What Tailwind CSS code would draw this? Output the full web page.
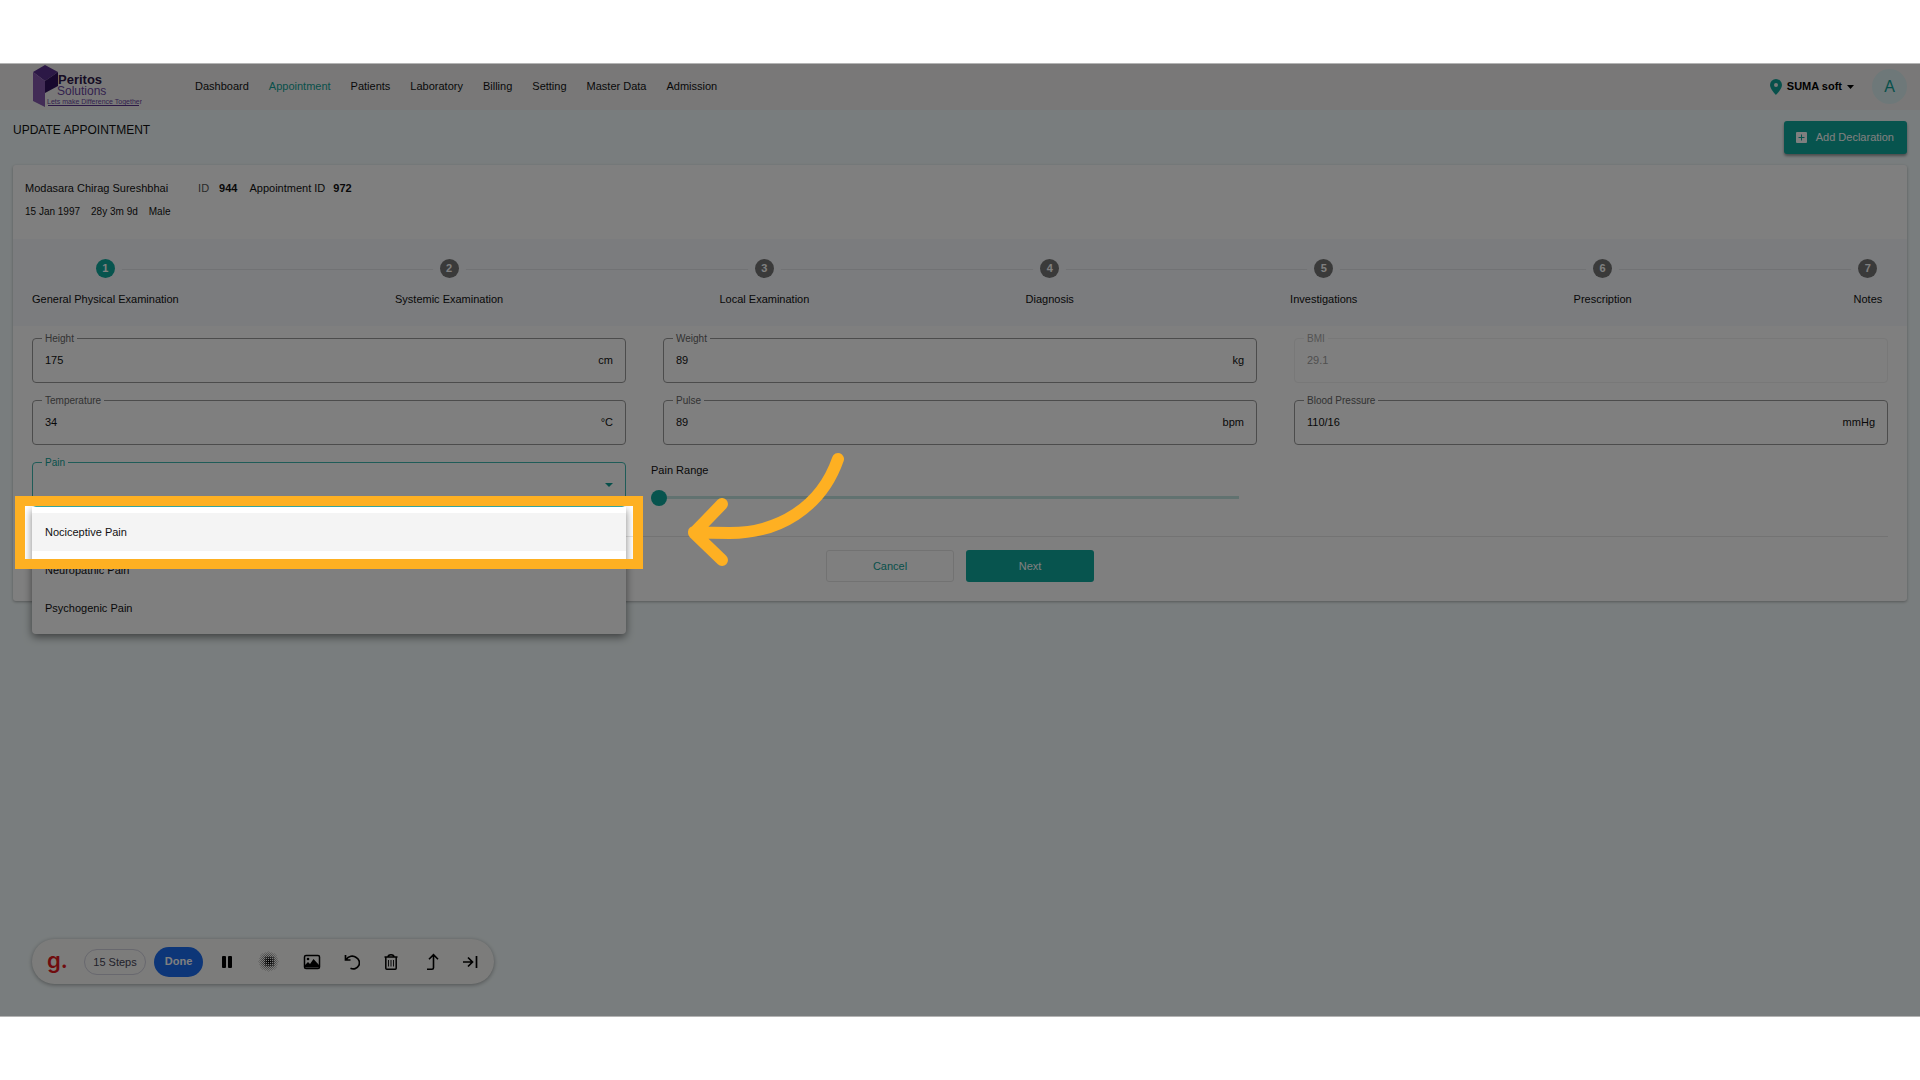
<!DOCTYPE html>
<html lang="en">
<head>
  <meta charset="UTF-8">
  <meta name="viewport" content="width=device-width, initial-scale=1.0">
  <title>Update Appointment - Peritos Solutions</title>
  <script src="https://cdn.jsdelivr.net/npm/@tailwindcss/browser@4"></script>
</head>
<body class="bg-white min-h-screen flex flex-col py-[63px] font-['Liberation_Sans',Arial,sans-serif] text-[11px] text-[#111]">

  <div class="relative flex-1 flex flex-col overflow-hidden bg-[#f3fbfc]">

    <!-- Top bar -->
    <header class="h-[47px] bg-[#f3f1f1] flex items-center pl-8 pr-[13px]">
      <a href="#" aria-label="Peritos Solutions" class="block">
        <svg width="110" height="46" viewBox="0 0 110 46">
          <polygon points="1,8 13,1 26,8 13,17" fill="#58308c" />
          <polygon points="1,8 13,17 13,43 1,37" fill="#8458ac" />
          <polygon points="13,17 26,8 26,22 13,29" fill="#30105c" />
          <text x="26" y="20" font-size="13" font-weight="bold" fill="#2c1848">Peritos</text>
          <text x="25" y="31" font-size="12" fill="#68449c">Solutions</text>
          <text x="15" y="40" font-size="7" fill="#68449c">Lets make Difference Together</text>
          <rect x="16" y="41" width="91" height="1" fill="#58308c" />
        </svg>
      </a>
      <nav class="flex gap-5 ml-[53px]">
        <a href="#">Dashboard</a>
        <a href="#" class="text-[#0fa196]">Appointment</a>
        <a href="#">Patients</a>
        <a href="#">Laboratory</a>
        <a href="#">Billing</a>
        <a href="#">Setting</a>
        <a href="#">Master Data</a>
        <a href="#">Admission</a>
      </nav>
      <button class="ml-auto flex items-center gap-[5px] font-bold text-black">
        <svg width="12" height="16" viewBox="0 0 12 16"><path fill="#0fa196" fill-rule="evenodd" d="M6 0a6 6 0 0 0-6 6c0 4 6 10 6 10s6-6 6-10a6 6 0 0 0-6-6zm0 4a2 2 0 1 1 0 4 2 2 0 0 1 0-4z" /></svg>
        SUMA soft
        <svg width="7" height="4" viewBox="0 0 7 4"><path d="M0 0h7L3.500 4z" /></svg>
      </button>
      <button class="ml-[18px] size-[35px] rounded-full bg-[#dcf0f2] text-base text-[#0fa196]">A</button>
    </header>

    <main class="px-[13px]">
      <div class="flex items-start justify-between py-[11px]">
        <h1 class="text-xs leading-[18px]">UPDATE APPOINTMENT</h1>
        <button class="flex items-center gap-[9px] h-[33px] px-[13px] pl-3 rounded-[3px] bg-[#0fa89c] text-white shadow-[0_2px_3px_rgba(0,0,0,0.4)]">
          <svg width="11" height="11" viewBox="0 0 11 11"><rect width="11" height="11" rx="1" fill="#fff" /><path d="M5.500 2.500v6M2.500 5.500h6" stroke="#0fa89c" /></svg>
          Add Declaration
        </button>
      </div>

      <section class="bg-white rounded-[3px] shadow-[0_1px_3px_rgba(0,0,0,0.3)]">

        <!-- Patient -->
        <div class="px-3 pt-3 pb-[14px]">
          <div class="flex items-center leading-[22px]">
            <h2>Modasara Chirag Sureshbhai</h2>
            <span class="ml-[30px] text-[#555]">ID</span>
            <b class="ml-[10px]">944</b>
            <span class="ml-3">Appointment ID</span>
            <b class="ml-2">972</b>
          </div>
          <div class="flex gap-[11px] text-[10px] leading-[26px]">
            <span>15 Jan 1997</span>
            <span>28y 3m 9d</span>
            <span>Male</span>
          </div>
        </div>

        <!-- Stepper -->
        <div class="relative bg-[#f6f8fc] px-[19px] pt-5 pb-[19px]">
          <div class="absolute left-[94px] right-10 top-[30px] h-px bg-[#e2e4e8]"></div>
          <ol class="relative flex justify-between leading-4">
            <li class="flex flex-col items-center gap-[13px]"><span class="size-[19px] rounded-full bg-[#0fa89c] ring-7 ring-[#f6f8fc] text-white font-bold leading-[19px] text-center">1</span>General Physical Examination</li>
            <li class="flex flex-col items-center gap-[13px]"><span class="size-[19px] rounded-full bg-[#757575] ring-7 ring-[#f6f8fc] text-white font-bold leading-[19px] text-center">2</span>Systemic Examination</li>
            <li class="flex flex-col items-center gap-[13px]"><span class="size-[19px] rounded-full bg-[#757575] ring-7 ring-[#f6f8fc] text-white font-bold leading-[19px] text-center">3</span>Local Examination</li>
            <li class="flex flex-col items-center gap-[13px]"><span class="size-[19px] rounded-full bg-[#757575] ring-7 ring-[#f6f8fc] text-white font-bold leading-[19px] text-center">4</span>Diagnosis</li>
            <li class="flex flex-col items-center gap-[13px]"><span class="size-[19px] rounded-full bg-[#757575] ring-7 ring-[#f6f8fc] text-white font-bold leading-[19px] text-center">5</span>Investigations</li>
            <li class="flex flex-col items-center gap-[13px]"><span class="size-[19px] rounded-full bg-[#757575] ring-7 ring-[#f6f8fc] text-white font-bold leading-[19px] text-center">6</span>Prescription</li>
            <li class="flex flex-col items-center gap-[13px] w-10"><span class="size-[19px] rounded-full bg-[#757575] ring-7 ring-[#f6f8fc] text-white font-bold leading-[19px] text-center">7</span>Notes</li>
          </ol>
        </div>

        <!-- Vitals -->
        <form class="px-[19px] pt-3 pb-[19px]">
          <div class="grid grid-cols-3 gap-x-[37px] gap-y-[17px]">
            <div class="relative flex items-center h-[45px] px-3 border border-[#999] rounded-[4px]">
              <label for="height" class="absolute left-[9px] -top-2 px-[3px] bg-white text-[10px] leading-4 text-[#666]">Height</label>
              <input id="height" type="text" value="175" class="flex-1 min-w-0 outline-none">
              <span>cm</span>
            </div>
            <div class="relative flex items-center h-[45px] px-3 border border-[#999] rounded-[4px]">
              <label for="weight" class="absolute left-[9px] -top-2 px-[3px] bg-white text-[10px] leading-4 text-[#666]">Weight</label>
              <input id="weight" type="text" value="89" class="flex-1 min-w-0 outline-none">
              <span>kg</span>
            </div>
            <div class="relative flex items-center h-[45px] px-3 border border-[#f0f0f0] rounded-[4px]">
              <label for="bmi" class="absolute left-[9px] -top-2 px-[3px] bg-white text-[10px] leading-4 text-[#a8a8a8]">BMI</label>
              <input id="bmi" type="text" value="29.1" disabled class="flex-1 min-w-0 outline-none text-[#a0a0a0]">
            </div>
            <div class="relative flex items-center h-[45px] px-3 border border-[#999] rounded-[4px]">
              <label for="temperature" class="absolute left-[9px] -top-2 px-[3px] bg-white text-[10px] leading-4 text-[#666]">Temperature</label>
              <input id="temperature" type="text" value="34" class="flex-1 min-w-0 outline-none">
              <span>°C</span>
            </div>
            <div class="relative flex items-center h-[45px] px-3 border border-[#999] rounded-[4px]">
              <label for="pulse" class="absolute left-[9px] -top-2 px-[3px] bg-white text-[10px] leading-4 text-[#666]">Pulse</label>
              <input id="pulse" type="text" value="89" class="flex-1 min-w-0 outline-none">
              <span>bpm</span>
            </div>
            <div class="relative flex items-center h-[45px] px-3 border border-[#999] rounded-[4px]">
              <label for="bp" class="absolute left-[9px] -top-2 px-[3px] bg-white text-[10px] leading-4 text-[#666]">Blood Pressure</label>
              <input id="bp" type="text" value="110/16" class="flex-1 min-w-0 outline-none">
              <span>mmHg</span>
            </div>
            <div class="relative flex items-center h-[45px] px-3 border border-[#3fb8b0] rounded-[4px]">
              <label for="pain" class="absolute left-[9px] -top-2 px-[3px] bg-white text-[10px] leading-4 text-[#0fa196]">Pain</label>
              <select id="pain" class="flex-1 appearance-none outline-none"><option></option></select>
              <svg width="8" height="4" viewBox="0 0 8 4"><path fill="#0fa196" d="M0 0h8L4 4z" /></svg>
              <!-- Open option list -->
              <ul role="listbox" aria-label="Pain" class="absolute -left-px -right-px top-11 z-10 pt-[6px] pb-[7px] bg-white rounded-b-[4px] shadow-[0_3px_8px_rgba(0,0,0,0.5)] leading-[38px]">
                <li role="option" class="px-[13px] bg-[#f4f4f4]">Nociceptive Pain</li>
                <li role="option" class="px-[13px]">Neuropathic Pain</li>
                <li role="option" class="px-[13px]">Psychogenic Pain</li>
              </ul>
            </div>
            <div class="-ml-3 pr-[18px] flex flex-col gap-[11px]">
              <label for="range" class="leading-4">Pain Range</label>
              <input id="range" type="range" min="0" max="10" value="0" class="appearance-none h-4 bg-transparent [&::-webkit-slider-runnable-track]:h-[3px] [&::-webkit-slider-runnable-track]:bg-[#c3e4e1] [&::-webkit-slider-thumb]:appearance-none [&::-webkit-slider-thumb]:size-4 [&::-webkit-slider-thumb]:-mt-[6px] [&::-webkit-slider-thumb]:rounded-full [&::-webkit-slider-thumb]:bg-[#0fa89c]">
            </div>
          </div>

          <hr class="mt-[29px] border-[#e6e6e6]">
          <div class="flex justify-center gap-3 mt-[13px]">
            <button type="button" class="w-32 h-8 rounded-[3px] border border-[#e4e4e4] text-[#0fa196]">Cancel</button>
            <button type="button" class="w-32 h-8 rounded-[3px] bg-[#0fa89c] text-white">Next</button>
          </div>
        </form>
      </section>
    </main>

    <!-- Recorder toolbar -->
    <div class="mt-auto mb-[33px] ml-8 w-[462px] h-[45px] rounded-full bg-[#f9f9f7] shadow-[0_1px_4px_rgba(0,0,0,0.35)] flex items-center pl-[15px] pr-4">
      <span class="w-[22px] text-[22px] leading-6 font-['Inter','Roboto',sans-serif] font-semibold text-[#e0181c] mb-1">g.</span>
      <span class="ml-[15px] w-[62px] h-[26px] rounded-full border border-[#d0d0dc] text-[#445] leading-6 text-center">15 Steps</span>
      <button class="ml-2 w-[49px] h-[30px] rounded-full bg-[#1a6cf0] text-white font-bold">Done</button>
      <div class="flex-1 flex items-center justify-between ml-4 text-black">
        <button aria-label="Pause"><svg width="16" height="14" viewBox="0 0 16 14"><rect x="3" y="1" width="4" height="12" rx="1" /><rect x="9" y="1" width="4" height="12" rx="1" /></svg></button>
        <button aria-label="Blur"><svg id="blur" width="21" height="21" viewBox="0 0 21 21" shape-rendering="crispEdges"></svg></button>
        <button aria-label="Image"><svg width="18" height="16" viewBox="0 0 18 16"><rect x="1.500" y="1.500" width="15" height="13" rx="1.500" fill="none" stroke="currentColor" stroke-width="1.500" /><circle cx="5" cy="5" r="1.300" /><path d="M2 13.500V11l3-3 2 2 3.500-5 5.500 6v2.500z" /></svg></button>
        <button aria-label="Undo"><svg width="16" height="16" viewBox="0 0 16 16" fill="none" stroke="currentColor" stroke-width="1.700"><path d="M1.500 1v5h5M2 5.800C4.500 2 9 1 12.200 3.500a6 6 0 0 1-5.700 10.700" /></svg></button>
        <button aria-label="Delete"><svg width="16" height="18" viewBox="0 0 16 18" fill="none" stroke="currentColor" stroke-width="1.500"><path d="M1.500 4h13M5 4c0-3 6-3 6 0M2.800 4v11.200q0 1 1 1h8.400q1 0 1-1V4" /><path stroke-width=".9" d="M5.500 7v6.500M8 7v6.500M10.500 7v6.500" /></svg></button>
        <button aria-label="Move up"><svg width="16" height="18" viewBox="0 0 16 18" fill="none" stroke="currentColor" stroke-width="1.600"><path d="M4 16.200h5q1.500 0 1.500-1.500V2M6 6.200l4.500-4.500L15 6.200" /></svg></button>
        <button aria-label="Skip"><svg width="16" height="14" viewBox="0 0 16 14" fill="none" stroke="currentColor" stroke-width="1.700"><path d="M1 7h9M6 2.500L10.500 7 6 11.500M14.500 1v12" /></svg></button>
      </div>
    </div>

    <!-- Spotlight on the first option, everything else dimmed -->
    <div class="absolute z-20 left-[15px] top-[433px] w-[628px] h-[73px] border-10 border-[#feb022] shadow-[0_0_0_2000px_rgba(0,0,0,0.5)] pointer-events-none"></div>
    <svg class="absolute z-20 left-[680px] top-[385px] pointer-events-none" width="170" height="125" viewBox="0 0 170 125" fill="none" stroke="#feb022" stroke-width="12" stroke-linecap="round" stroke-linejoin="round">
      <path d="M158 11C141 60 98 85 50 85Q32 85 14 84M42 56L14 85l28 27" />
    </svg>
    <div class="absolute z-20 inset-0 border-y border-[#b4b4b4] pointer-events-none"></div>
  </div>

  <script>
    // checkered dots, dense in the middle and fading towards the edge
    const blur = document.getElementById("blur");
    for (let y = 0; y < 21; y++) {
      for (let x = 0; x < 21; x++) {
        const d = Math.hypot(x - 10, y - 10);
        if (d > 10 || (x + y) % 2) continue;
        const fade = Math.max(0.15, 1.1 - d / 10);
        const size = d < 6 && x % 2 === 0 ? 2 : 1;
        blur.innerHTML += `<rect x="${x}" y="${y}" width="${size}" height="1" opacity="${fade.toFixed(2)}" />`;
      }
    }
  </script>

</body>
</html>
